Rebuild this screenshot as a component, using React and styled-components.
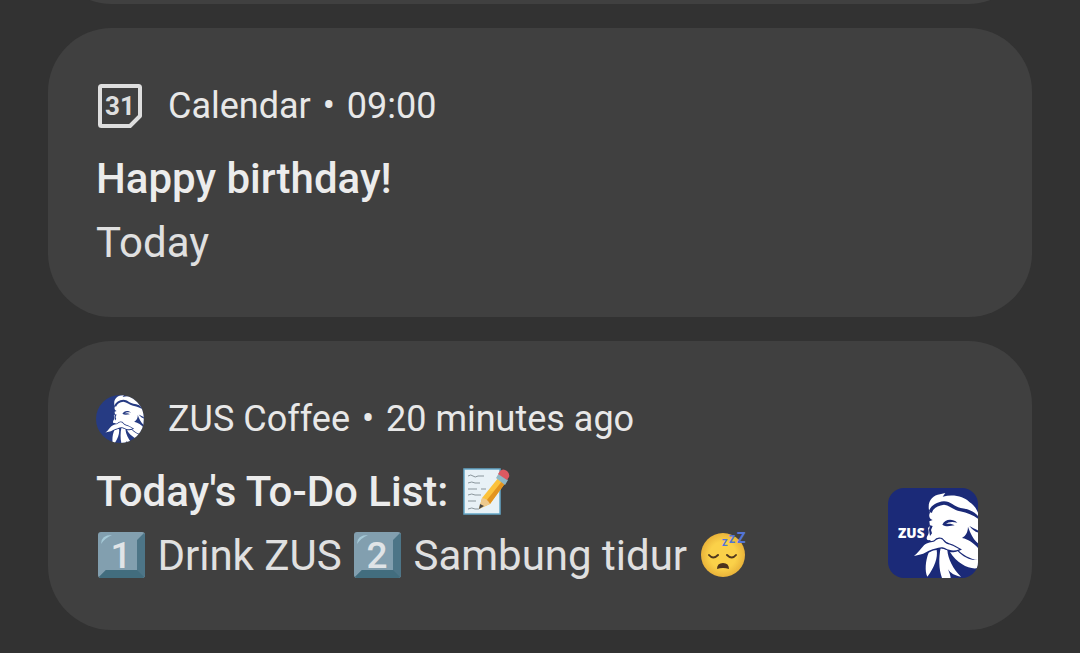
import React from 'react';
import styled, { createGlobalStyle } from 'styled-components';

const GlobalStyle = createGlobalStyle`
  * {
    box-sizing: border-box;
  }

  body {
    margin: 0;
    background-color: #323232;
    font-family: Roboto, 'Noto Sans', sans-serif;
  }

  #root {
    overflow: hidden;
  }
`;

const Shade = styled.main`
  display: flex;
  flex-direction: column;
  gap: 24px;
  padding: 0 48px 23px;
  min-height: 100vh;
`;

const Card = styled.article`
  background-color: #404040;
  border-radius: 64px;
  padding: 54px 54px 42px 48px;
`;

/* The card above is scrolled almost out of view */
const ScrolledCard = styled(Card)`
  height: 192px;
  margin-top: -188px;
`;

const Header = styled.header`
  display: flex;
  align-items: center;
  gap: 24px;
  margin-bottom: 17px;
  color: #e8e8e8;
  font-size: 36px;
  line-height: 48px;

  svg {
    width: 48px;
    height: 48px;
    flex: none;
  }
`;

const Dot = styled.span`
  padding: 0 3px;
`;

const Content = styled.div`
  display: flex;
  align-items: flex-end;
  justify-content: space-between;
  gap: 24px;
`;

const Title = styled.h2`
  margin: 0;
  color: #ececec;
  font-size: 42px;
  font-weight: 500;
  line-height: 64px;
`;

const Message = styled.p`
  margin: 0;
  color: #e0e0e0;
  font-size: 42px;
  line-height: 64px;
`;

const Emoji = styled.svg`
  width: 51px;
  height: 52px;
  vertical-align: -11px;
`;

const LargeIcon = styled.svg`
  flex: none;
  width: 90px;
  height: 90px;
  margin-bottom: 10px;
  border-radius: 16px;
`;

const CalendarIcon = () => (
  <svg viewBox="0 0 48 48" aria-hidden="true">
    <path
      d="M5.500 4H42.500Q44 4 44 5.500V34L34 44H5.500Q4 44 4 42.500V5.500Q4 4 5.500 4Z"
      fill="none"
      stroke="#dedede"
      strokeWidth="4"
      strokeLinejoin="round"
    />
    <text x="24" y="33" textAnchor="middle" fontFamily="Roboto, sans-serif" fontSize="26" fontWeight="700" fill="#dedede">
      31
    </text>
  </svg>
);

const Zeus = ({ line }) => (
  <g>
    {/* hair, face and cheek */}
    <path
      fill="#fff"
      d="M147 90C142 64 158 46 180 43L196 39L188 50C222 42 252 50 268 66C282 74 290 88 294 98V240C270 238 246 222 230 206L198 186H160L148 180C140 182 138 176 142 168C148 160 146 152 144 144L150 138L148 124L158 120C146 116 146 104 150 98Z"
    />
    {/* strand between the forehead and the hair */}
    <path
      fill={line}
      d="M147 92C154 76 170 66 192 64C212 64 222 80 242 84C262 86 282 94 294 108V116C280 106 262 98 240 94C220 90 210 76 192 74C174 76 160 84 156 98C152 98 149 96 147 92Z"
    />
    <path fill={line} d="M150 136L158 138L153 150L156 160L150 168L147 150Z" />
    {/* eye */}
    <path fill={line} d="M187 134C194 118 216 114 232 128C216 124 204 126 198 132C208 130 218 132 224 136C212 138 198 142 187 134Z" />
    {/* ear */}
    <path fill={line} d="M264 140C264 152 260 162 254 168L246 174C266 178 282 190 294 204V190C280 178 270 158 264 140ZM268 138C278 150 286 156 296 158V152C286 148 276 142 268 138Z" />
    {/* beard */}
    <path
      fill="#fff"
      d="M146 218C156 212 164 210 170 210C174 232 164 262 142 290C134 274 136 242 146 218ZM182 204L202 210C204 238 220 268 243 290C224 288 210 278 204 268C208 278 212 288 212 294H186C176 268 176 232 182 204ZM210 216C218 218 226 216 232 212C248 230 272 242 294 240V264C270 270 232 252 210 216Z"
    />
    {/* moustache */}
    <path
      fill="#fff"
      stroke={line}
      strokeWidth="7"
      paintOrder="stroke"
      d="M102 228C114 220 122 206 132 196C142 187 156 188 164 184C172 174 184 174 190 182C198 194 210 192 220 198L238 208C224 214 208 212 196 205C184 198 176 204 164 206C148 208 134 222 118 224Z"
    />
  </g>
);

const ZusAvatar = () => (
  <svg viewBox="0 0 48 48" aria-hidden="true">
    <defs>
      <clipPath id="avatar-clip">
        <circle cx="24" cy="24" r="24" />
      </clipPath>
    </defs>
    <g clipPath="url(#avatar-clip)">
      <rect width="48" height="48" fill="#263b83" />
      <g transform="translate(-11 -8) scale(.2)">
        <Zeus line="#263b83" />
      </g>
    </g>
  </svg>
);

const ZusLogo = () => (
  <LargeIcon viewBox="24 24 270 270" role="img" aria-label="ZUS Coffee">
    <rect x="24" y="24" width="270" height="270" fill="#1b2a78" />
    <Zeus line="#1b2a78" />
    <text x="54" y="174" fontFamily="Open Sans, sans-serif" fontSize="41" fontWeight="800" fill="#fff">
      ZUS
    </text>
  </LargeIcon>
);

const MemoEmoji = () => (
  <Emoji viewBox="-3 -1 51 52" role="img" aria-label="Memo">
    <rect x="2" y="3" width="36" height="45" fill="#e8f1f6" stroke="#64a7c7" strokeWidth="1.500" />
    <path
      d="M6 10q3-2 5 0t5 0h6M6 17q4-2 7 0h5M6 23h9m4 0h5M6 29q4-2 7 0h6M6 35h8M6 43q4-2 7 0h4"
      fill="none"
      stroke="#8a969c"
      strokeWidth="1"
    />
    <path d="M17 43L20 32L37 11L44 16L28 38Z" fill="#fbc23c" />
    <path d="M24 35L41 14L44 16L28 38Z" fill="#e29420" />
    <path d="M17 43L20 32Q25 32 28 38Z" fill="#edc98d" />
    <path d="M17 43L18 38L22 40Z" fill="#464646" />
    <path d="M34 12L37 7L46 14L43 19Z" fill="#8fb8c5" />
    <path d="M36 8L38 5Q41 2 45 5Q48 8 47 11L45 14Z" fill="#dc5961" />
  </Emoji>
);

const KeycapEmoji = ({ digit }) => (
  <Emoji viewBox="-1 -1 51 52" role="img" aria-label={`Keycap ${digit}`}>
    <rect x="1" y="2" width="47" height="46" rx="3" fill="#829faf" />
    <path d="M47 3Q48 4 48 5V45Q48 48 45 48H4Q3 48 2 47L9 40H40V10Z" fill="#4d7587" />
    <path d="M40 40L47 47Q46 48 45 48H4Q3 48 2 47L9 40Z" fill="#426d7e" />
    <path d="M4 14Q4 5 15 5Q8 8 4 14Z" fill="#a5c9d7" />
    <text x="24" y="38" textAnchor="middle" fontFamily="Roboto, sans-serif" fontSize="37" fontWeight="500" fill="#e0e4e7">
      {digit}
    </text>
  </Emoji>
);

const SleepingEmoji = () => (
  <Emoji viewBox="-1 -1 51 52" role="img" aria-label="Sleeping face">
    <defs>
      <radialGradient id="face">
        <stop offset="0.6" stopColor="#fbd149" />
        <stop offset="1" stopColor="#e9b33a" />
      </radialGradient>
    </defs>
    <circle cx="24" cy="25" r="22" fill="url(#face)" />
    <path d="M10 25Q14 30 19 25M28 25Q33 30 37 25" fill="none" stroke="#51391e" strokeWidth="2" strokeLinecap="round" />
    <path d="M18 39Q18 33 24 33T30 39Q24 37 18 39Z" fill="#4b321d" />
    <g fontFamily="Roboto, sans-serif" fontWeight="900" fill="#5374d6">
      <text x="23" y="16" fontSize="9">Z</text>
      <text x="30" y="13" fontSize="10">Z</text>
      <text x="38" y="13" fontSize="14">Z</text>
    </g>
  </Emoji>
);

const App = () => {
  return (
    <>
      <GlobalStyle />
      <Shade>
        <ScrolledCard aria-hidden="true" />
        <Card>
          <Header>
            <CalendarIcon />
            <span>
              Calendar <Dot>•</Dot> 09:00
            </span>
          </Header>
          <Content>
            <div>
              <Title>Happy birthday!</Title>
              <Message>Today</Message>
            </div>
          </Content>
        </Card>
        <Card>
          <Header>
            <ZusAvatar />
            <span>
              ZUS Coffee <Dot>•</Dot> 20 minutes ago
            </span>
          </Header>
          <Content>
            <div>
              <Title>
                Today's To-Do List: <MemoEmoji />
              </Title>
              <Message>
                <KeycapEmoji digit="1" /> Drink ZUS <KeycapEmoji digit="2" /> Sambung tidur <SleepingEmoji />
              </Message>
            </div>
            <ZusLogo />
          </Content>
        </Card>
      </Shade>
    </>
  );
};

export default App;
